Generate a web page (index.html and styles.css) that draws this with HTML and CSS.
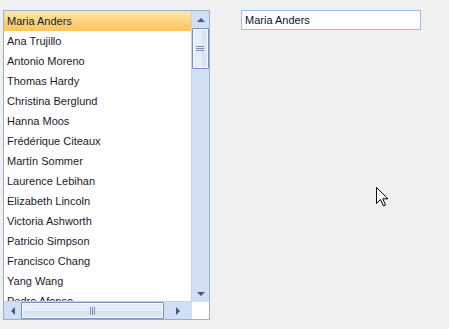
FILE: index.html
```html
<!DOCTYPE html>
<html>
<head>
<meta charset="utf-8">
<link rel="stylesheet" href="styles.css">
</head>
<body>
<div class="form">
  <div class="listbox">
    <div class="items">
      <div class="item selected">Maria Anders</div>
      <div class="item">Ana Trujillo</div>
      <div class="item">Antonio Moreno</div>
      <div class="item">Thomas Hardy</div>
      <div class="item">Christina Berglund</div>
      <div class="item">Hanna Moos</div>
      <div class="item">Frédérique Citeaux</div>
      <div class="item">Martín Sommer</div>
      <div class="item">Laurence Lebihan</div>
      <div class="item">Elizabeth Lincoln</div>
      <div class="item">Victoria Ashworth</div>
      <div class="item">Patricio Simpson</div>
      <div class="item">Francisco Chang</div>
      <div class="item">Yang Wang</div>
      <div class="item">Pedro Afonso</div>
    </div>
    <div class="vscroll">
      <div class="arrow"><span class="tri up"></span></div>
      <div class="vthumb"><span class="grip-h"></span><span class="grip-h"></span><span class="grip-h"></span></div>
      <div class="track"></div>
      <div class="arrow"><span class="tri down"></span></div>
    </div>
    <div class="hscroll">
      <div class="harrow"><span class="tri left"></span></div>
      <div class="hthumb"><span class="grip-v"></span><span class="grip-v"></span><span class="grip-v"></span></div>
      <div class="track"></div>
      <div class="harrow"><span class="tri right"></span></div>
    </div>
    <div class="corner"></div>
  </div>
  <div class="textbox">Maria Anders</div>
</div>
<svg class="cursor" width="13" height="20" viewBox="0 0 13 20">
  <path d="M0.5 0.5 L0.5 16.5 L4.5 12.5 L7.5 19 L9.5 18 L6.8 11.8 L12 11.8 Z" fill="#fff" stroke="#000" stroke-width="1" stroke-linejoin="miter"/>
</svg>
</body>
</html>
```

FILE: styles.css
```css
html, body {
  margin: 0;
  padding: 0;
  background: #f0f0f0;
  width: 449px;
  height: 329px;
  overflow: hidden;
  font-family: "Liberation Sans", Arial, sans-serif;
  font-size: 11px;
  color: #000;
}
.form {
  display: flex;
  align-items: flex-start;
  padding: 10px 0 0 3px;
  gap: 31px;
}
.listbox {
  width: 205px;
  height: 308px;
  border: 1px solid #9aaed0;
  display: grid;
  grid-template-columns: 188px 17px;
  grid-template-rows: 291px 17px;
  background: #fff;
}
.items {
  overflow: hidden;
  background: #fff;
}
.item {
  height: 20px;
  line-height: 20px;
  padding-left: 3px;
  white-space: nowrap;
  color: #1a1a2a;
}
.item.selected {
  background: linear-gradient(#fee8ac, #fdd27a 55%, #fbc55c);
}
.vscroll {
  display: flex;
  flex-direction: column;
  background: #d0dff3;
  border-left: 1px solid #c2d3ec;
  margin-left: -1px;
}
.arrow {
  height: 17px;
  display: flex;
  align-items: center;
  justify-content: center;
  flex: none;
}
.track { flex: 1; }
.vthumb {
  height: 39px;
  margin: 0 0 0 0;
  border: 1px solid #7890bb;
  border-radius: 1px;
  background: linear-gradient(90deg, #e6edf9 0, #e6edf9 60%, #d6e2f4 60%, #dfe8f6 100%);
  box-shadow: inset 0 0 0 1px #f7f9fd;
  display: flex;
  flex-direction: column;
  align-items: center;
  justify-content: center;
  gap: 1px;
  flex: none;
}
.grip-h {
  width: 8px;
  height: 1px;
  background: #7890bb;
  margin-left: -2px;
}
.hscroll {
  display: flex;
  background: #d0dff3;
  border-top: 1px solid #c2d3ec;
  margin-top: -1px;
}
.harrow {
  width: 17px;
  display: flex;
  align-items: center;
  justify-content: center;
  flex: none;
}
.hthumb {
  width: 141px;
  border: 1px solid #7890bb;
  border-radius: 1px;
  background: linear-gradient(#e6edf9 0, #e6edf9 55%, #d6e2f4 55%, #dfe8f6 100%);
  box-shadow: inset 0 0 0 1px #f7f9fd;
  display: flex;
  align-items: center;
  justify-content: center;
  gap: 1px;
  flex: none;
}
.hscroll .track { flex: 1; }
.hscroll .harrow:last-child { width: 28px; }
.grip-v {
  width: 1px;
  height: 8px;
  background: #7890bb;
}
.corner { background: #fff; }
.tri {
  width: 0;
  height: 0;
  display: block;
}
.tri.up {
  border-left: 4px solid transparent;
  border-right: 4px solid transparent;
  border-bottom: 4px solid #4a5a78;
}
.tri.down {
  border-left: 4px solid transparent;
  border-right: 4px solid transparent;
  border-top: 4px solid #4a5a78;
}
.tri.left {
  border-top: 4px solid transparent;
  border-bottom: 4px solid transparent;
  border-right: 4px solid #4a5a78;
}
.tri.right {
  border-top: 4px solid transparent;
  border-bottom: 4px solid transparent;
  border-left: 4px solid #4a5a78;
}
.textbox {
  width: 175px;
  height: 18px;
  line-height: 18px;
  padding-left: 3px;
  border: 1px solid #9cbbe6;
  background: #fff;
  white-space: nowrap;
  color: #101030;
}
.cursor {
  position: absolute;
  left: 376px;
  top: 187px;
}
```
